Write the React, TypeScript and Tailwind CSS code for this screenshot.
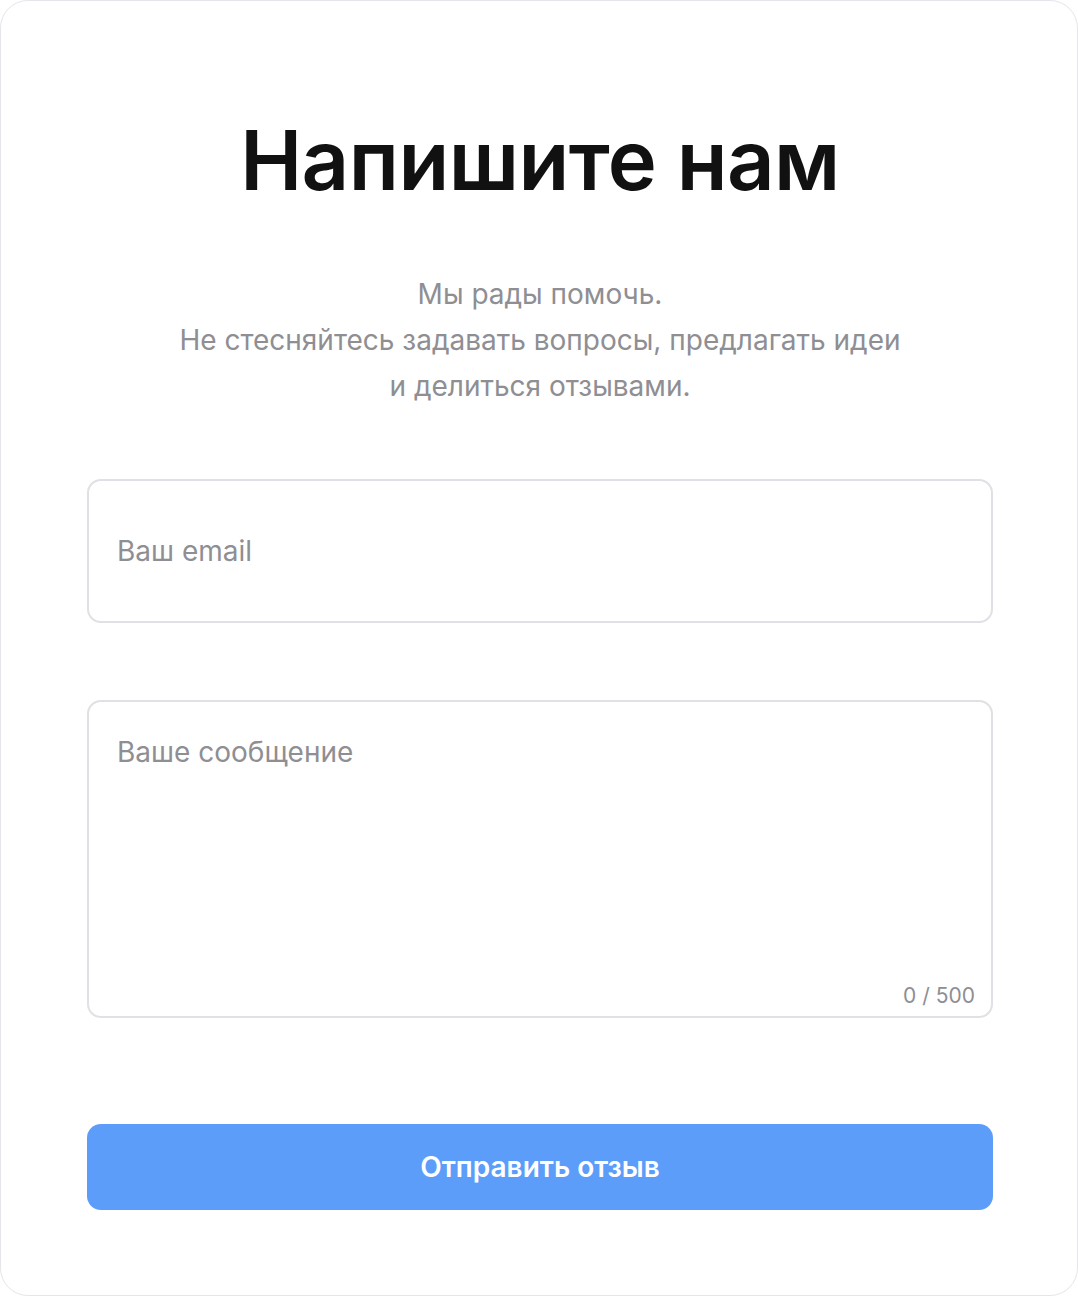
import { useState } from "react";

export default function App() {
    const [email, setEmail] = useState("");
    const [message, setMessage] = useState("");

    return (
        <div className="w-[1078px] h-[1296px] bg-white" style={{ fontFamily: "Inter, 'Noto Sans', sans-serif" }}>
            <div className="w-full h-full border border-[#e5e5ea] rounded-[28px] flex flex-col items-center pl-[86px] pr-[84px] pt-[104px]">
                <h1 className="text-[83px] leading-[110px] font-semibold text-[#111111] tracking-[-0.5px]">Напишите нам</h1>
                <p className="mt-[56px] text-center text-[28px] leading-[46px] text-[#8e8e93]">
                    Мы рады помочь.
                    <br />
                    Не стесняйтесь задавать вопросы, предлагать идеи
                    <br />
                    и делиться отзывами.
                </p>
                <form className="w-full mt-[70px] flex flex-col" onSubmit={(e) => e.preventDefault()}>
                    <input
                        type="email"
                        value={email}
                        onChange={(e) => setEmail(e.target.value)}
                        placeholder="Ваш email"
                        className="w-full h-[144px] border-2 border-[#e0e0e5] rounded-[14px] px-[28px] text-[28px] text-[#111] placeholder-[#8e8e93] outline-none"
                    />
                    <div className="relative mt-[77px] h-[318px]">
                        <textarea
                            value={message}
                            maxLength={500}
                            onChange={(e) => setMessage(e.target.value)}
                            placeholder="Ваше сообщение"
                            className="w-full h-full border-2 border-[#e0e0e5] rounded-[14px] px-[28px] pt-[32px] text-[28px] leading-[36px] text-[#111] placeholder-[#8e8e93] outline-none resize-none"
                        />
                        <span className="absolute right-[18px] bottom-[7px] text-[21px] text-[#8e8e93]">{message.length} / 500</span>
                    </div>
                    <button
                        type="submit"
                        className="mt-[106px] w-full h-[86px] bg-[#5b9df9] rounded-[14px] text-white text-[28px] font-semibold"
                    >
                        Отправить отзыв
                    </button>
                </form>
            </div>
        </div>
    );
}
